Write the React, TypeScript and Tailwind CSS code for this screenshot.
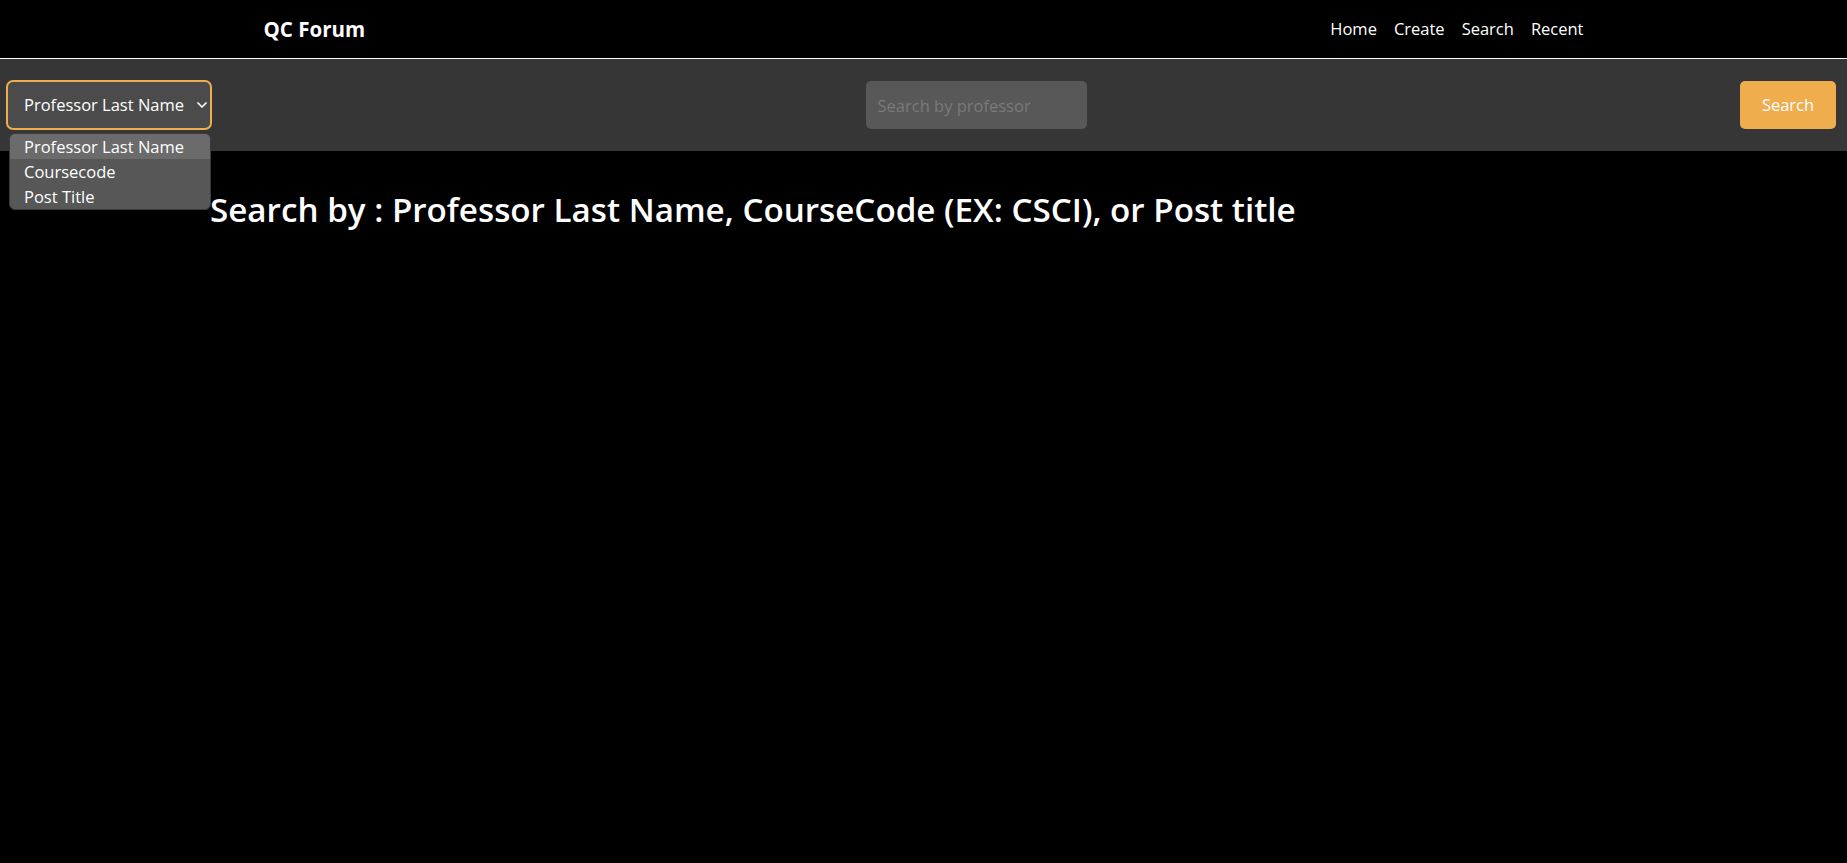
import { ChevronDown } from "lucide-react";

export default function App() {
  const options = ["Professor Last Name", "Coursecode", "Post Title"];

  return (
    <div className="min-h-screen bg-black text-white font-['Open_Sans',sans-serif]">
      {/* Top nav */}
      <header className="h-[59px] border-b border-white">
        <div className="mx-auto flex h-[58px] w-[1320px] items-center justify-between">
          <span className="text-[20.5px] font-bold">QC Forum</span>
          <nav className="flex items-center gap-[17px] text-[16.5px]">
            <a href="#">Home</a>
            <a href="#">Create</a>
            <a href="#">Search</a>
            <a href="#">Recent</a>
          </nav>
        </div>
      </header>

      {/* Search bar */}
      <div className="flex h-[92px] items-center justify-between bg-[#363636] pl-[6px] pr-[11px]">
        <div className="relative">
          <div className="flex h-[50px] w-[206px] items-center justify-between rounded-[7px] border-2 border-[#f0ad4e] bg-[#4b4b4b] pl-[16px] pr-0 text-[16.5px]">
            <span>Professor Last Name</span>
            <ChevronDown size={16} strokeWidth={2.5} />
          </div>
          {/* open option list */}
          <ul className="absolute left-[3px] top-[53px] w-[202px] overflow-hidden rounded-[6px] border border-[#3a3a3a] bg-[#575757] text-[16.5px] leading-[25px]">
            {options.map((o, i) => (
              <li key={o} className={i === 0 ? "bg-[#6b6b6b] pl-[14px]" : "pl-[14px]"}>
                {o}
              </li>
            ))}
          </ul>
        </div>

        <input
          placeholder="Search by professor"
          className="h-[48px] w-[221px] rounded-[5px] bg-[#585858] px-[12px] text-[16.5px] text-white outline-none placeholder:text-[#7a7a7a]"
        />

        <button className="h-[48px] w-[96px] rounded-[5px] bg-[#f0ad4e] text-[16.5px] text-white">
          Search
        </button>
      </div>

      {/* Heading */}
      <h1 className="ml-[210px] mt-[39px] text-[33.2px] font-semibold leading-[40px]">
        Search by : Professor Last Name, CourseCode (EX: CSCI), or Post title
      </h1>
    </div>
  );
}
